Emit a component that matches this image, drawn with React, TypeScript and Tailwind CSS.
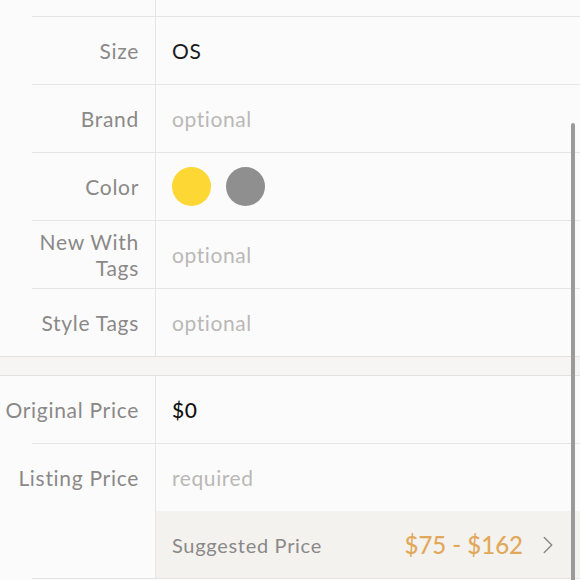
import { ChevronRight } from "lucide-react";

const font = { fontFamily: "Lato, 'Noto Sans', sans-serif" };

function Row({
  label,
  children,
  line = true,
}: {
  label: React.ReactNode;
  children?: React.ReactNode;
  line?: boolean;
}) {
  return (
    <div className="flex flex-col">
      <div className="flex h-[67px]">
        <div className="flex w-[156px] shrink-0 items-center justify-end border-r border-[#e7e5e3] pr-[16px] text-right text-[21px] leading-[26px] tracking-[0.7px] whitespace-nowrap text-[#8a8988]">
          {label}
        </div>
        <div className="flex flex-1 items-center pl-4 text-[21px] tracking-[0.6px]">{children}</div>
      </div>
      {line && <div className="ml-8 h-px bg-[#e7e5e3]" />}
    </div>
  );
}

const Placeholder = ({ text }: { text: string }) => (
  <span className="text-[#b9b8b7]">{text}</span>
);

export default function App() {
  return (
    <div className="relative h-[580px] w-[580px] overflow-hidden bg-[#fcfbfb]" style={font}>
      {/* partial row above */}
      <div className="flex h-4">
        <div className="w-[156px] border-r border-[#e7e5e3]" />
      </div>
      <div className="ml-8 h-px bg-[#e7e5e3]" />

      <Row label="Size">
        <span className="text-[#1c1c1c]">OS</span>
      </Row>
      <Row label="Brand">
        <Placeholder text="optional" />
      </Row>
      <Row label="Color">
        <div className="flex gap-[15px]">
          <div className="h-[39px] w-[39px] rounded-full bg-[#fdd733]" />
          <div className="h-[39px] w-[39px] rounded-full bg-[#8f8f8f]" />
        </div>
      </Row>
      <Row
        label={
          <div className="flex flex-col items-end">
            <span>New With</span>
            <span>Tags</span>
          </div>
        }
      >
        <Placeholder text="optional" />
      </Row>
      <Row label="Style Tags" line={false}>
        <Placeholder text="optional" />
      </Row>

      {/* section gap */}
      <div className="h-[20px] border-y border-[#e4e2df] bg-[#f6f5f3]" />

      <Row label="Original Price">
        <span className="font-medium text-[#111]">$0</span>
      </Row>
      <Row label="Listing Price" line={false}>
        <Placeholder text="required" />
      </Row>
      <div className="flex h-[67px]">
        <div className="w-[156px] shrink-0 border-r border-[#e7e5e3]" />
        <div className="flex flex-1 items-center bg-[#f4f2ef] pl-4 pr-[17px]">
          <span className="text-[20px] tracking-[0.7px] text-[#8a8988]">Suggested Price</span>
          <span className="ml-auto text-[24px] font-medium text-[#e2a85a]">$75 - $162</span>
          <ChevronRight className="ml-[10px] h-[30px] w-[30px] text-[#8a8988]" strokeWidth={1.2} />
        </div>
      </div>
      <div className="ml-8 h-px bg-[#e7e5e3]" />

      {/* scroll indicator */}
      <div className="absolute top-[123px] left-[571px] h-[480px] w-[4px] rounded-full bg-[#9a9a9a]" />
    </div>
  );
}
